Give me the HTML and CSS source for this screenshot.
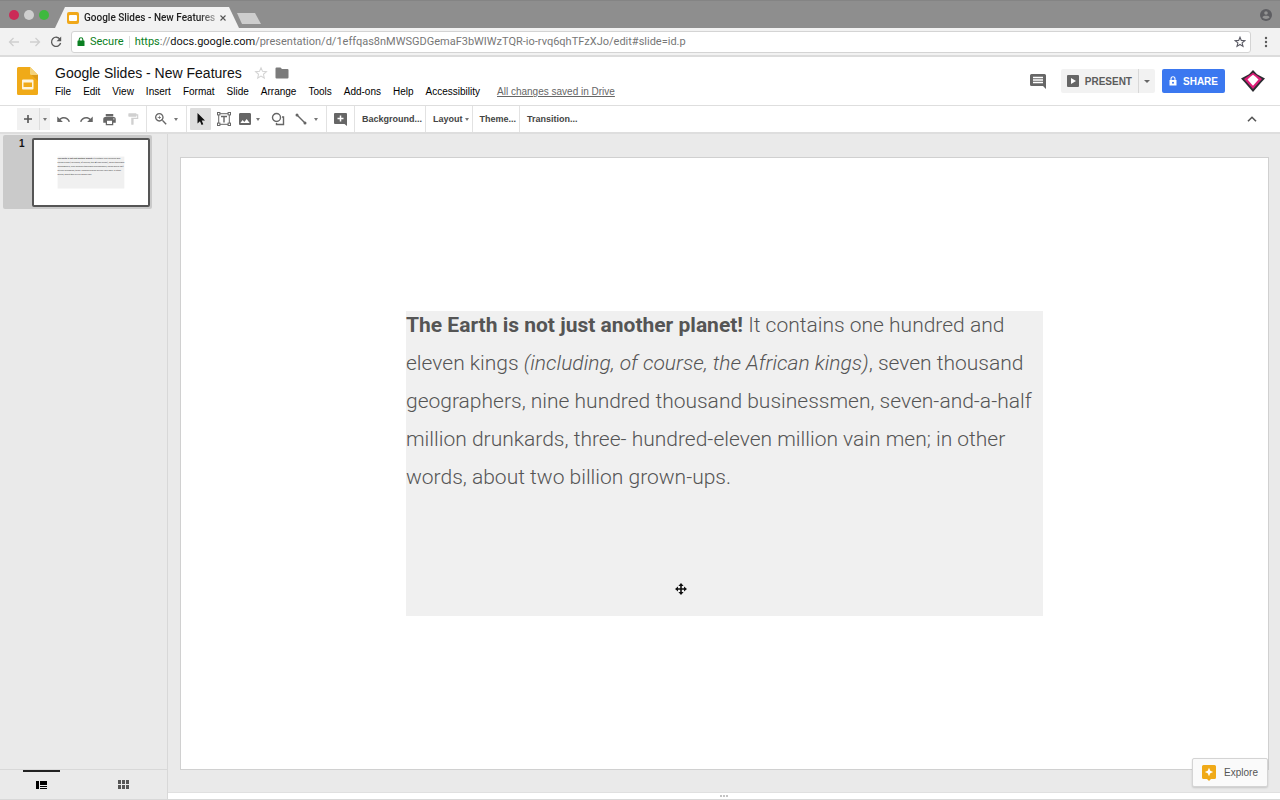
FILE: index.html
```html
<!DOCTYPE html>
<html lang="en">
<head>
  <meta charset="UTF-8">
  <title>Google Slides - New Features</title>
  <link rel="stylesheet" href="styles.css">
</head>
<body>
<div class="tabstrip">
  <div class="lights">
    <span class="light red"></span>
    <span class="light grey"></span>
    <span class="light green"></span>
  </div>
  <div class="tab">
    <svg width="12" height="12" viewBox="0 0 12 12"><rect width="12" height="12" rx="2" fill="#f0a81a"/><rect x="2" y="3" width="8" height="6" rx="1" fill="#fff"/></svg>
    <span class="tab-title">Google Slides - New Features</span>
    <button class="tab-close" aria-label="Close tab"><svg width="6" height="6" viewBox="0 0 6 6"><path d="M.5.5l5 5M5.5.5l-5 5" stroke="#555" stroke-width="1.1"/></svg></button>
  </div>
  <button class="new-tab" aria-label="New tab"></button>
  <button class="profile" aria-label="Profile"><svg width="12" height="12" viewBox="0 0 12 12"><circle cx="6" cy="6" r="6" fill="#5e5e62"/><circle cx="6" cy="4" r="1.8" fill="#939393"/><path d="M2.4 8.2C3.500 6.300 8.500 6.300 9.600 8.200 8.200 10.500 3.800 10.500 2.400 8.200z" fill="#939393"/></svg></button>
</div>

<div class="navbar">
  <button aria-label="Back"><svg width="12" height="10" viewBox="0 0 12 10"><path d="M11 5H1.500M5.500 1L1.500 5l4 4" fill="none" stroke="#cfcfcf" stroke-width="1.300"/></svg></button>
  <button aria-label="Forward"><svg width="12" height="10" viewBox="0 0 12 10"><path d="M1 5h9.500M6.500 1l4 4-4 4" fill="none" stroke="#cfcfcf" stroke-width="1.300"/></svg></button>
  <button aria-label="Reload"><svg width="12" height="12" viewBox="0 0 12 12"><path d="M10 3.300A4.600 4.600 0 1 0 10.600 7" fill="none" stroke="#5a5a5a" stroke-width="1.300"/><path d="M11.200.6v4.600H6.600z" fill="#5a5a5a"/></svg></button>
  <div class="omnibox">
    <svg width="8" height="9" viewBox="0 0 8 9"><rect x=".5" y="3.500" width="7" height="5.500" rx=".6" fill="#0b8022"/><path d="M2.200 4V2.600a1.800 1.800 0 0 1 3.600 0V4" fill="none" stroke="#0b8022" stroke-width="1.100"/></svg>
    <span class="secure">Secure</span>
    <a class="url" href="#"><span class="scheme">https</span>://<span class="host">docs.google.com</span>/presentation/d/1effqas8nMWSGDGemaF3bWIWzTQR-io-rvq6qhTFzXJo/edit#slide=id.p</a>
    <button aria-label="Bookmark"><svg width="12" height="12" viewBox="0 0 12 12"><path d="M6 1.200l1.300 3.200 3.500.3-2.700 2.200.9 3.500L6 8.500 3 10.400l.9-3.500L1.200 4.700l3.500-.3z" fill="none" stroke="#5a5a64" stroke-width="1.100"/></svg></button>
  </div>
  <button class="dots" aria-label="Menu"><svg width="4" height="12" viewBox="0 0 4 12" fill="#5a5a5a"><circle cx="2" cy="2" r="1.200"/><circle cx="2" cy="6" r="1.200"/><circle cx="2" cy="10" r="1.200"/></svg></button>
</div>

<header class="header">
  <svg class="logo" width="21" height="28" viewBox="0 0 21 28"><path d="M1.500 0H13l8 8v18.500a1.500 1.500 0 0 1-1.500 1.500h-18A1.500 1.500 0 0 1 0 26.500v-25A1.500 1.500 0 0 1 1.500 0z" fill="#f0aa18"/><path d="M13 0l8 8h-6.500A1.500 1.500 0 0 1 13 6.500z" fill="#f4d27a"/><path d="M14.500 8H21v6z" fill="#dd9a17"/><path d="M6 12.500h9.500a1 1 0 0 1 1 1v8a1 1 0 0 1-1 1H6a1 1 0 0 1-1-1v-8a1 1 0 0 1 1-1zm.5 3v4.500H15v-4.500z" fill="#fdf5df" fill-rule="evenodd"/></svg>
  <div class="doc">
    <div class="doc-top">
      <input class="doc-name" type="text" value="Google Slides - New Features" aria-label="Document name">
      <button aria-label="Star"><svg width="14" height="14" viewBox="0 0 24 24"><path d="M12 3l2.600 6.200 6.700.6-5.100 4.400 1.500 6.500-5.700-3.400-5.700 3.400 1.500-6.500-5.100-4.400 6.700-.6z" fill="none" stroke="#d4d4d4" stroke-width="1.800"/></svg></button>
      <button aria-label="Folder"><svg width="14" height="12" viewBox="0 0 14 12"><path d="M1.500.5H5.500L7 2h5.500A1 1 0 0 1 13.500 3v7.500a1 1 0 0 1-1 1h-11a1 1 0 0 1-1-1v-9a1 1 0 0 1 1-1z" fill="#7b7b7b"/></svg></button>
    </div>
    <nav class="menu">
      <button>File</button>
      <button>Edit</button>
      <button>View</button>
      <button>Insert</button>
      <button>Format</button>
      <button>Slide</button>
      <button>Arrange</button>
      <button>Tools</button>
      <button>Add-ons</button>
      <button>Help</button>
      <button>Accessibility</button>
      <a class="saved" href="#">All changes saved in Drive</a>
    </nav>
  </div>
  <div class="actions">
    <button class="comments" aria-label="Comments"><svg width="16" height="16" viewBox="0 0 16 16"><path d="M1.500 1h13A1.500 1.500 0 0 1 16 2.500V16l-3-3H1.500A1.500 1.500 0 0 1 0 11.500v-9A1.500 1.500 0 0 1 1.500 1z" fill="#666"/><path d="M3 4.500h10M3 7h10M3 9.500h10" stroke="#fff" stroke-width="1.300"/></svg></button>
    <div class="present">
      <button class="present-main"><svg width="12" height="12" viewBox="0 0 12 12"><rect width="12" height="12" rx="1" fill="#666"/><path d="M4 3l5 3-5 3z" fill="#fff"/></svg>PRESENT</button>
      <button class="present-more" aria-label="Present options"><span class="caret"></span></button>
    </div>
    <button class="share"><svg width="8" height="10" viewBox="0 0 8 10"><path d="M2 4V2.800a2 2 0 0 1 4 0V4" fill="none" stroke="#fff" stroke-width="1.100"/><path d="M.5 4h7v5.500h-7z" fill="#fff"/><circle cx="4" cy="6.700" r="1" fill="#3b78f0"/></svg>SHARE</button>
    <button class="avatar" aria-label="Account"><svg width="24" height="22" viewBox="0 0 24 22"><path d="M12 0l4 4.200L24 8.500l-3.800 4L12 22l-8.200-9.500L0 8.500l8-4.300z" fill="#2d2d32"/><path d="M12 2.800L21 9l-9 10L3 9z" fill="#dc1c77"/><path d="M12 4.800l2.600 2L17.500 9.500 12 15.800 6.500 9.500l2.900-2.700z" fill="#fff"/></svg></button>
  </div>
</header>

<div class="toolbar">
  <div class="group first">
    <div class="new-slide">
      <button class="new-main" aria-label="New slide"><svg width="10" height="10" viewBox="0 0 10 10"><path d="M5 1v8M1 5h8" stroke="#555" stroke-width="1.600"/></svg></button>
      <button class="new-more" aria-label="New slide with layout"><span class="caret"></span></button>
    </div>
    <button class="tool" aria-label="Undo"><svg width="15" height="15" viewBox="0 0 24 24"><path d="M12.500 8c-2.650 0-5.050.99-6.900 2.600L2 7v9h9l-3.620-3.620c1.390-1.160 3.160-1.880 5.120-1.880 3.540 0 6.550 2.310 7.600 5.500l2.370-.78C21.080 11.030 17.150 8 12.500 8z"/></svg></button>
    <button class="tool" aria-label="Redo"><svg width="15" height="15" viewBox="0 0 24 24"><path d="M18.400 10.600C16.550 8.990 14.150 8 11.500 8c-4.650 0-8.580 3.030-9.960 7.220L3.900 16c1.050-3.190 4.050-5.500 7.600-5.500 1.950 0 3.730.72 5.120 1.880L13 16h9V7l-3.600 3.600z"/></svg></button>
    <button class="tool" aria-label="Print"><svg width="15" height="15" viewBox="0 0 24 24"><path d="M19 8H5c-1.660 0-3 1.340-3 3v6h4v4h12v-4h4v-6c0-1.660-1.340-3-3-3zm-3 11H8v-5h8v5zm3-7c-.55 0-1-.45-1-1s.45-1 1-1 1 .45 1 1-.45 1-1 1zm-1-9H6v4h12V3z"/></svg></button>
    <button class="tool off" aria-label="Paint format"><svg width="14" height="14" viewBox="0 0 24 24"><path d="M18 4V3c0-.55-.45-1-1-1H5c-.55 0-1 .45-1 1v4c0 .55.45 1 1 1h12c.55 0 1-.45 1-1V6h1v4H9v11c0 .55.45 1 1 1h2c.55 0 1-.45 1-1v-9h8V4h-3z"/></svg></button>
  </div>
  <div class="group">
    <button class="tool" aria-label="Zoom"><svg width="16" height="16" viewBox="0 0 24 24"><path d="M15.500 14h-.79l-.28-.27C15.410 12.590 16 11.110 16 9.500 16 5.910 13.090 3 9.500 3S3 5.910 3 9.500 5.910 16 9.500 16c1.610 0 3.090-.59 4.230-1.570l.27.28v.79l5 4.990L20.490 19l-4.990-5zm-6 0C7.010 14 5 11.990 5 9.500S7.010 5 9.500 5 14 7.010 14 9.500 11.990 14 9.500 14zm2.500-4h-2v2H9v-2H7V9h2V7h1v2h2v1z"/></svg></button>
    <button class="more" aria-label="Zoom options"><span class="caret"></span></button>
  </div>
  <div class="group">
    <button class="tool on" aria-label="Select"><svg width="10" height="14" viewBox="0 0 10 14"><path d="M1.500 1v10.500l2.500-2.300 1.600 3.800 1.700-.7L5.700 8.600H9z" fill="#111"/></svg></button>
    <button class="tool" aria-label="Text box"><svg width="14" height="14" viewBox="0 0 14 14"><rect x="1.700" y="1.700" width="10.600" height="10.600" fill="none" stroke="#666" stroke-width="1"/><path d="M4 4.500h6M7 4.500v6" stroke="#666" stroke-width="1.400"/><g fill="#fff" stroke="#666" stroke-width="1"><rect x=".5" y=".5" width="2.400" height="2.400"/><rect x="11.100" y=".5" width="2.400" height="2.400"/><rect x=".5" y="11.100" width="2.400" height="2.400"/><rect x="11.100" y="11.100" width="2.400" height="2.400"/></g></svg></button>
    <button class="tool narrow" aria-label="Image"><svg width="16" height="16" viewBox="0 0 24 24"><path d="M21 19V5c0-1.100-.9-2-2-2H5c-1.100 0-2 .9-2 2v14c0 1.100.9 2 2 2h14c1.100 0 2-.9 2-2zM8.500 13.500l2.500 3.010L14.500 12l4.500 6H5l3.500-4.500z"/></svg></button>
    <button class="more" aria-label="Image options"><span class="caret"></span></button>
    <button class="tool" aria-label="Shape"><svg width="14" height="14" viewBox="0 0 14 14"><circle cx="5.500" cy="5.500" r="4" fill="none" stroke="#666" stroke-width="1.400"/><path d="M11 5h1.500v7.500H5.500V11" fill="none" stroke="#666" stroke-width="1.400"/></svg></button>
    <button class="tool" aria-label="Line"><svg width="12" height="12" viewBox="0 0 12 12"><path d="M2 2l8 8" stroke="#666" stroke-width="1.500"/><circle cx="2" cy="2" r="1.500"/><circle cx="10" cy="10" r="1.500"/></svg></button>
    <button class="more" aria-label="Line options"><span class="caret"></span></button>
  </div>
  <div class="group">
    <button class="tool" aria-label="Add comment"><svg width="13" height="13" viewBox="0 0 13 13"><path d="M1 0h11a1 1 0 0 1 1 1v12l-2.500-2H1a1 1 0 0 1-1-1V1a1 1 0 0 1 1-1z"/><path d="M6.500 2.500v6M3.500 5.500h6" stroke="#fff" stroke-width="1.500"/></svg></button>
  </div>
  <div class="group"><button class="text-tool">Background...</button></div>
  <div class="group"><button class="text-tool">Layout<span class="caret"></span></button></div>
  <div class="group"><button class="text-tool">Theme...</button></div>
  <div class="group last"><button class="text-tool">Transition...</button></div>
  <button class="collapse" aria-label="Hide the menus"><svg width="10" height="6" viewBox="0 0 10 6"><path d="M1 5.300l4-4 4 4" fill="none" stroke="#555" stroke-width="1.600"/></svg></button>
</div>

<main class="workspace">
  <aside class="filmstrip">
    <div class="thumb-row">
      <span class="thumb-num">1</span>
      <svg class="thumb" viewBox="0 0 1088 612">
        <rect width="1088" height="612" fill="#fff"/>
        <rect x="225" y="154" width="637" height="305" fill="#f0f0f0"/>
        <g class="thumb-text">
          <text x="225" y="175"><tspan class="strong">The Earth is not just another planet!</tspan> It contains one hundred and</text>
          <text x="225" y="213">eleven kings (including, of course, the African kings), seven thousand</text>
          <text x="225" y="252">geographers, nine hundred thousand businessmen, seven-and-a-half</text>
          <text x="225" y="290">million drunkards, three- hundred-eleven million vain men; in other</text>
          <text x="225" y="329">words, about two billion grown-ups.</text>
        </g>
      </svg>
    </div>
    <div class="views">
      <button class="view current" aria-label="Filmstrip view"><svg width="11" height="8" viewBox="0 0 11 8"><path d="M0 0h3v8H0zM4 0h7v4H4zM4 5h7v1H4zM4 7h7v1H4z"/></svg></button>
      <button class="view" aria-label="Grid view"><svg width="11" height="9" viewBox="0 0 11 9" fill="#555"><path d="M0 0h3v4H0zM4 0h3v4H4zM8 0h3v4H8zM0 5h3v4H0zM4 5h3v4H4zM8 5h3v4H8z"/></svg></button>
    </div>
  </aside>
  <section class="editor">
    <div class="canvas">
      <div class="slide">
        <div class="text-box">
          <p><b>The Earth is not just another planet!</b> It contains one hundred and eleven kings <i>(including, of course, the African kings)</i>, seven thousand geographers, nine hundred thousand businessmen, seven-and-a-half million drunkards, three- hundred-eleven million vain men; in other words, about two billion grown-ups.</p>
          <svg class="move-cursor" width="12" height="12" viewBox="0 0 12 12"><path d="M6 1v10M1 6h10" stroke="#111" stroke-width="1.600"/><path d="M6 0l2.600 3H3.400zM6 12l2.600-3H3.400zM0 6l3-2.600v5.200zM12 6L9 3.400v5.200z" fill="#111"/></svg>
        </div>
      </div>
      <button class="explore"><svg width="14" height="16" viewBox="0 0 14 16"><path d="M1.500 0h11A1.500 1.500 0 0 1 14 1.500v11a1.500 1.500 0 0 1-1.500 1.500H9l-2 2-2-2H1.500A1.500 1.500 0 0 1 0 12.500v-11A1.500 1.500 0 0 1 1.500 0z" fill="#f0aa18"/><path d="M7 2.800l1.300 2.900L11.200 7 8.300 8.300 7 11.200 5.700 8.300 2.800 7l2.900-1.300z" fill="#fff"/></svg>Explore</button>
    </div>
    <div class="notes-handle"><span></span><span></span><span></span></div>
  </section>
</main>
</body>
</html>
```
FILE: styles.css
```css
* {
  box-sizing: border-box;
}

body {
  margin: 0;
  height: 100vh;
  display: flex;
  flex-direction: column;
  font-family: "Liberation Sans", Arial, sans-serif;
  background: #fff;
  color: #111;
}

button {
  display: flex;
  align-items: center;
  justify-content: center;
  padding: 0;
  border: none;
  background: none;
  font-family: inherit;
  color: inherit;
  cursor: pointer;
}

svg {
  display: block;
  flex: none;
}

.caret {
  border: 2px solid transparent;
  border-top: 3px solid #777;
  border-bottom: 0;
}

/* browser window */
.tabstrip {
  display: flex;
  align-items: flex-end;
  height: 28px;
  background: #8e8e8e;
  border-top: 1px solid #848484;
}

.lights {
  display: flex;
  align-items: center;
  align-self: center;
  gap: 5px;
  padding-left: 9px;
  width: 55px;
}

.light {
  width: 10px;
  height: 10px;
  border-radius: 50%;
}

.red { background: #cb2a57; }
.grey { background: #cfcfcf; }
.green { background: #3fb93f; }

.tab {
  display: flex;
  align-items: center;
  width: 184px;
  height: 21px;
  padding: 0 12px;
  background: #f2f2f2;
  clip-path: polygon(10px 0, 174px 0, 100% 100%, 0 100%);
}

.tab-title {
  flex: 1;
  margin-left: 5px;
  white-space: nowrap;
  font: 500 10px/16px Roboto, sans-serif;
  color: #222;
  mask-image: linear-gradient(to right, #000 85%, rgba(0, 0, 0, 0.2));
}

.tab-close {
  width: 8px;
  height: 12px;
}

.new-tab {
  width: 24px;
  height: 11px;
  margin: 0 0 4px -2px;
  background: #cdcdcd;
  clip-path: polygon(0 0, 18px 0, 100% 100%, 5px 100%);
}

.profile {
  align-self: center;
  margin: 0 8px 0 auto;
}

.navbar {
  display: flex;
  align-items: center;
  gap: 9px;
  height: 29px;
  padding: 0 8px;
  background: #f2f2f2;
  border-bottom: 2px solid #dcdcdc;
}

.omnibox {
  flex: 1;
  display: flex;
  align-items: center;
  height: 22px;
  padding: 0 4px 0 5px;
  background: #fff;
  border: 1px solid #d4d4d4;
  border-radius: 3px;
  font: 11px/20px Roboto, sans-serif;
  white-space: nowrap;
}

.secure {
  margin-left: 5px;
  padding-right: 5px;
  border-right: 1px solid #ddd;
  line-height: 12px;
  color: #0b8022;
}

.url {
  flex: 1;
  padding-left: 5px;
  color: #777;
  text-decoration: none;
}

.scheme { color: #0b8022; }
.host { color: #111; }

.dots {
  width: 12px;
}

/* document header */
.header {
  display: flex;
  align-items: center;
  height: 49px;
  padding: 0 15px 0 17px;
  border-bottom: 1px solid #dedede;
}

.doc {
  flex: 1;
  margin-left: 17px;
  padding-top: 2px;
}

.doc-top {
  display: flex;
  align-items: center;
  gap: 7px;
  height: 20px;
}

.doc-name {
  width: 192px;
  padding: 0;
  border: none;
  outline: none;
  font: 14px/20px "Liberation Sans", Arial, sans-serif;
  color: #111;
}

.menu {
  display: flex;
  align-items: center;
  gap: 12px;
  height: 18px;
}

.menu button,
.saved {
  font-size: 10px;
  line-height: 16px;
  white-space: nowrap;
}

.menu button {
  color: #000;
}

.saved {
  margin-left: 5px;
  color: #666;
}

.actions {
  display: flex;
  align-items: center;
}

.comments {
  margin-right: 15px;
}

.present {
  display: flex;
  height: 24px;
  margin-right: 7px;
  background: #f2f2f2;
  border-radius: 2px;
  color: #5c5c5c;
}

.present-main,
.share {
  gap: 6px;
  padding: 0 6px;
  font-size: 10px;
  font-weight: bold;
}

.present-more {
  width: 17px;
  border-left: 1px solid #d8d8d8;
}

.present-more .caret {
  border-width: 3px 3px 0;
  border-top-color: #666;
}

.share {
  height: 24px;
  padding: 0 7px;
  background: #3b78f0;
  border-radius: 2px;
  color: #fff;
}

.avatar {
  margin-left: 16px;
}

/* toolbar */
.toolbar {
  display: flex;
  height: 28px;
  padding-left: 14px;
  border-bottom: 2px solid #dedede;
}

.group {
  display: flex;
  align-items: center;
  gap: 2px;
  padding: 0 3px;
  border-right: 1px solid #e2e2e2;
}

.group.last {
  border-right: none;
}

.new-slide {
  display: flex;
  height: 22px;
  margin-right: 1px;
  background: #f1f1f1;
}

.new-main {
  width: 22px;
}

.new-more {
  width: 11px;
  border-left: 1px solid #ddd;
}

.tool {
  width: 21px;
  height: 22px;
  fill: #666;
}

.tool.narrow {
  width: 17px;
}

.tool.off {
  fill: #d0d0d0;
}

.tool.on {
  background: #dedede;
  border-radius: 1px;
}

.more {
  width: 6px;
  height: 22px;
  margin-right: 4px;
}

.text-tool {
  gap: 2px;
  height: 22px;
  padding: 0 0 0 4px;
  font-size: 9px;
  font-weight: bold;
  color: #444;
}

.collapse {
  width: 20px;
  margin: 0 18px 0 auto;
}

/* filmstrip */
.workspace {
  flex: 1;
  display: flex;
  min-height: 0;
  border-bottom: 1px solid #d8d8d8;
}

.filmstrip {
  display: flex;
  flex-direction: column;
  justify-content: space-between;
  width: 168px;
  padding-top: 1px;
  background: #eaeaea;
  border-right: 1px solid #d8d8d8;
}

.thumb-row {
  display: flex;
  justify-content: space-between;
  margin: 0 15px 0 3px;
  padding: 3px 2px 2px 16px;
  background: #cacaca;
  border-radius: 2px;
}

.thumb-num {
  font-size: 10px;
  font-weight: bold;
  line-height: 12px;
}

.thumb {
  width: 118px;
  height: 69px;
  background: #fff;
  border: 2px solid #555;
  border-radius: 2px;
}

.thumb-text {
  font: 400 21px Roboto, sans-serif;
  fill: #444;
}

.strong {
  font-weight: 700;
}

.views {
  display: flex;
  height: 30px;
  padding-right: 3px;
  border-top: 1px solid #d8d8d8;
}

.view {
  flex: 1;
}

.current {
  position: relative;
}

.current::before {
  content: "";
  position: absolute;
  top: 0;
  left: 23px;
  width: 37px;
  height: 2px;
  background: #222;
}

/* slide editor */
.editor {
  flex: 1;
  display: flex;
  flex-direction: column;
}

.canvas {
  position: relative;
  flex: 1;
  display: flex;
  padding: 23px 11px 22px 12px;
  background: #eaeaea;
}

.slide {
  flex: 1;
  padding: 153px 225px 0;
  background: #fff;
  border: 1px solid #d0d0d0;
}

.text-box {
  position: relative;
  display: flow-root;
  height: 305px;
  background: #f0f0f0;
}

.text-box p {
  margin: -5px 0 0;
  font: 300 21px/38px Roboto, sans-serif;
  color: #555;
}

.text-box b {
  font-weight: 700;
}

.move-cursor {
  position: absolute;
  left: 269px;
  top: 272px;
}

.explore {
  position: absolute;
  right: 12px;
  bottom: 5px;
  gap: 8px;
  width: 76px;
  height: 29px;
  background: #fafafa;
  border: 1px solid #d4d4d4;
  border-radius: 2px;
  box-shadow: 0 1px 2px rgba(0, 0, 0, 0.15);
  font-size: 10px;
  color: #555;
}

.notes-handle {
  display: flex;
  align-items: center;
  justify-content: center;
  gap: 1px;
  height: 7px;
  background: #fff;
  border-top: 1px solid #e0e0e0;
}

.notes-handle span {
  width: 2px;
  height: 2px;
  background: #c4c4c4;
}
```
